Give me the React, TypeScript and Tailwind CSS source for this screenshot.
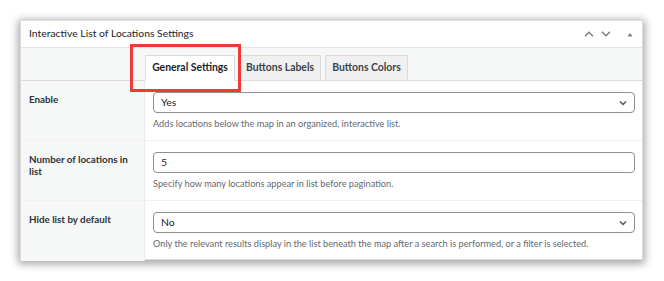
const rows = [
  {
    label: 'Enable',
    kind: 'select',
    value: 'Yes',
    help: 'Adds locations below the map in an organized, interactive list.',
  },
  {
    label: 'Number of locations in list',
    kind: 'input',
    value: '5',
    help: 'Specify how many locations appear in list before pagination.',
  },
  {
    label: 'Hide list by default',
    kind: 'select',
    value: 'No',
    help: 'Only the relevant results display in the list beneath the map after a search is performed, or a filter is selected.',
  },
]

function SmallChevron() {
  return (
    <svg width="8" height="6" viewBox="0 0 8 6" fill="none" stroke="#50575e" strokeWidth="1.5">
      <path d="M1 1.5 L4 4.5 L7 1.5" />
    </svg>
  )
}

export default function App() {
  return (
    <div
      className="w-[664px] h-[281px] bg-white pt-[20px] pl-[20px] text-[#1d2327]"
      style={{ fontFamily: 'Lato, "Noto Sans", sans-serif' }}
    >
      <div className="relative w-[623px] h-[240px] bg-white border border-[#dcdcde] shadow-[0_2px_8px_2px_rgba(0,0,0,0.35)]">
        {/* Header */}
        <div className="h-[27px] flex items-center justify-between pl-[8px] pr-[9px] border-b border-[#e5e5e5]">
          <span className="text-[10.4px] text-[#1d2327]">Interactive List of Locations Settings</span>
          <div className="flex items-center gap-[7px] text-[#787c82]">
            <svg width="10" height="6" viewBox="0 0 10 6" fill="none" stroke="currentColor" strokeWidth="1.4">
              <path d="M1 5.2 L5 1.2 L9 5.2" />
            </svg>
            <svg width="10" height="6" viewBox="0 0 10 6" fill="none" stroke="currentColor" strokeWidth="1.4">
              <path d="M1 0.8 L5 4.8 L9 0.8" />
            </svg>
            <svg width="6" height="5" viewBox="0 0 6 5" className="ml-[9px]">
              <path d="M0.5 4.5 L3 1 L5.5 4.5 Z" fill="currentColor" />
            </svg>
          </div>
        </div>

        {/* Tabs */}
        <div className="h-[33px] flex items-end bg-[#f6f7f7] border-b border-[#dcdcde] pl-[124px]">
          <div className="h-[26px] w-[90px] bg-white border border-[#dcdcde] border-b-white -mb-px flex items-center justify-center text-[10.4px] font-bold whitespace-nowrap">
            General Settings
          </div>
          <div className="h-[26px] w-[82px] ml-[4px] bg-[#f0f0f1] border border-[#dcdcde] -mb-px flex items-center justify-center text-[10.4px] font-bold text-[#3c434a] whitespace-nowrap">
            Buttons Labels
          </div>
          <div className="h-[26px] w-[83px] ml-[4px] bg-[#f0f0f1] border border-[#dcdcde] -mb-px flex items-center justify-center text-[10.4px] font-bold text-[#3c434a] whitespace-nowrap">
            Buttons Colors
          </div>
        </div>

        {/* Rows */}
        {rows.map((row, i) => (
          <div key={row.label} className={`flex h-[60px] ${i < rows.length - 1 ? 'border-b border-[#f0f0f1]' : ''}`}>
            <div className="w-[124px] shrink-0 bg-[#f6f7f7] border-r border-[#ebebeb] pl-[8px] pt-[12px] pr-[14px] text-[9.8px] font-bold leading-[12px] text-[#2c3338]">
              {row.label}
            </div>
            <div className="flex-1 min-w-0 pl-[8px] pr-[7px] pt-[11px]">
              <div className="h-[21px] border border-[#8c8f94] rounded-[4px] flex items-center justify-between pl-[7px] pr-[7px] text-[10.4px]">
                <span>{row.value}</span>
                {row.kind === 'select' && <SmallChevron />}
              </div>
              <div className="mt-[5px] text-[9.2px] leading-[12px] text-[#646970] whitespace-nowrap">{row.help}</div>
            </div>
          </div>
        ))}

        {/* Highlight box */}
        <div className="absolute left-[109px] top-[23px] w-[111px] h-[48px] border-[3px] border-[#ef3b36]" />
      </div>
    </div>
  )
}
